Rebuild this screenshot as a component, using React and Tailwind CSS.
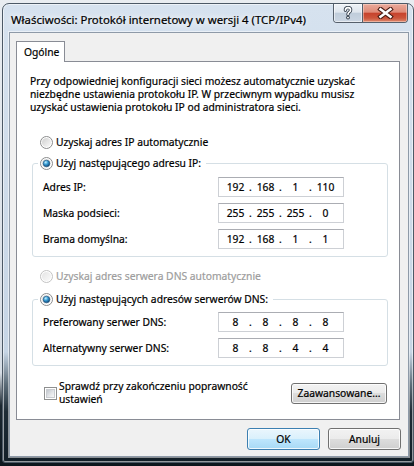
import { Fragment } from "react";

const sans = "font-['Noto_Sans','Open_Sans',sans-serif]";

function Radio({ id, checked = false, disabled = false }) {
  return (
    <svg width="13" height="13" viewBox="0 0 13 13" className="shrink-0">
      <defs>
        <linearGradient id={`${id}-bg`} x1="0" y1="0" x2="1" y2="1">
          <stop offset="0" stopColor={disabled ? "#e4e4e4" : "#cfcfcf"} />
          <stop offset="1" stopColor={disabled ? "#fafafa" : "#fbfbfb"} />
        </linearGradient>
        <radialGradient id={`${id}-dot`} cx="0.38" cy="0.32" r="0.7">
          <stop offset="0" stopColor="#c4f0ff" />
          <stop offset="0.45" stopColor="#3b9fd6" />
          <stop offset="1" stopColor="#0c4577" />
        </radialGradient>
      </defs>
      <circle cx="6.5" cy="6.5" r="6" fill="#fff" stroke={disabled ? "#c2c2c2" : "#8b8c8d"} />
      <circle cx="6.5" cy="6.5" r="4.6" fill={`url(#${id}-bg)`} />
      {checked && (
        <circle cx="6.5" cy="6.5" r="3.3" fill={`url(#${id}-dot)`} stroke="#1b4f7a" strokeWidth="0.6" />
      )}
    </svg>
  );
}

function Checkbox() {
  return (
    <span className="flex h-[13px] w-[13px] shrink-0 border border-[#8e8f8f] bg-white p-px">
      <span className="block h-full w-full border border-[#c9ccd1] bg-[linear-gradient(135deg,#c2c7cd_0%,#e3e5e8_55%,#f7f7f7_100%)]" />
    </span>
  );
}

function OptionRow({ id, checked, disabled, children }) {
  return (
    <div className={`flex h-[14px] items-center gap-[3px] whitespace-nowrap ${disabled ? "text-[#9d9d9d]" : "text-black"}`}>
      <Radio id={id} checked={checked} disabled={disabled} />
      <span>{children}</span>
    </div>
  );
}

function IpField({ parts }) {
  return (
    <div className="flex h-[20px] w-[126px] items-center border border-[#cdd0d5] border-t-[#abadb3] bg-white pl-[3px]">
      {parts.map((p, i) => (
        <Fragment key={i}>
          {i > 0 && <span className="w-[3px] text-center">.</span>}
          <span className="w-[27px] text-center">{p}</span>
        </Fragment>
      ))}
    </div>
  );
}

function FieldRow({ label, parts }) {
  return (
    <div className="flex h-[20px] items-center">
      <span className="w-[175px] whitespace-nowrap">{label}</span>
      <IpField parts={parts} />
    </div>
  );
}

function GroupBox({ id, title, rows, topPad, className = "" }) {
  return (
    <fieldset className={`w-[356px] rounded-[3px] border border-[#d5dfe5] px-0 pb-[7px] ${className}`}>
      <legend className="ml-[5px] px-[2px] pr-[5px]">
        <OptionRow id={id} checked>
          {title}
        </OptionRow>
      </legend>
      <div className={`flex flex-col gap-[6px] pl-[10px] ${topPad}`}>
        {rows.map((r) => (
          <FieldRow key={r.label} label={r.label} parts={r.parts} />
        ))}
      </div>
    </fieldset>
  );
}

function PushButton({ children, primary = false, className = "" }) {
  const skin = primary
    ? "border-[#3c7fb1] bg-[linear-gradient(to_bottom,#eaf6fd_0%,#d9f0fc_50%,#bee6fd_50%,#a7d9f5_100%)]"
    : "border-[#707070] bg-[linear-gradient(to_bottom,#f2f2f2_0%,#ebebeb_50%,#dddddd_50%,#cfcfcf_100%)]";
  return (
    <button
      type="button"
      className={`flex items-center justify-center rounded-[3px] border text-black shadow-[inset_0_0_0_1px_rgba(255,255,255,0.8)] ${skin} ${className}`}
    >
      {children}
    </button>
  );
}

function CaptionButtons() {
  return (
    <div className="mr-[5px] flex h-[19px] self-start overflow-hidden rounded-b-[4px] border border-t-0 border-[#56606c]">
      <div className="flex w-[28px] items-center justify-center bg-[linear-gradient(to_bottom,#eef2f7_0%,#dfe6ee_45%,#c0cddb_52%,#cbd6e3_100%)] shadow-[inset_0_0_0_1px_rgba(255,255,255,0.55)]">
        <svg width="10" height="14" viewBox="0 0 10 14">
          <path
            d="M2.4 4.3C2.4 2.5 3.6 1.6 5 1.6C6.6 1.6 7.6 2.6 7.6 3.9C7.6 5.2 6.8 5.8 6 6.4C5.3 6.9 5 7.4 5 8.5"
            fill="none"
            stroke="#3a4552"
            strokeWidth="3.4"
            strokeLinecap="round"
          />
          <path
            d="M2.4 4.3C2.4 2.5 3.6 1.6 5 1.6C6.6 1.6 7.6 2.6 7.6 3.9C7.6 5.2 6.8 5.8 6 6.4C5.3 6.9 5 7.4 5 8.5"
            fill="none"
            stroke="#ffffff"
            strokeWidth="1.6"
            strokeLinecap="round"
          />
          <circle cx="5" cy="11.6" r="1.9" fill="#3a4552" />
          <circle cx="5" cy="11.6" r="0.95" fill="#ffffff" />
        </svg>
      </div>
      <div className="w-px bg-[#56606c]" />
      <div className="flex w-[44px] items-center justify-center bg-[linear-gradient(to_bottom,#eaaa9b_0%,#df8b78_45%,#c7432d_52%,#cc553b_78%,#de8a6f_100%)] shadow-[inset_0_0_0_1px_rgba(255,230,220,0.45)]">
        <svg width="17" height="12" viewBox="0 0 17 12">
          <path d="M3.5 2.2L13.5 9.8M13.5 2.2L3.5 9.8" stroke="#4a1d14" strokeWidth="4.6" strokeLinecap="square" />
          <path d="M3.5 2.2L13.5 9.8M13.5 2.2L3.5 9.8" stroke="#ffffff" strokeWidth="2.5" strokeLinecap="square" />
        </svg>
      </div>
    </div>
  );
}

export default function App() {
  return (
    <div
      className={`h-[466px] w-[414px] overflow-hidden bg-[linear-gradient(to_bottom,#e9edf1_0%,#d6dde5_80%,#1c2831_87%,#0c161d_100%)] pl-[2px] pt-[3px] text-[10.3px] leading-[13px] text-black [-webkit-text-stroke:0.2px] ${sans}`}
    >
      <div className="flex h-[460px] w-[412px] flex-col rounded-b-[3px] rounded-t-[7px] border border-[#4c5966] bg-[linear-gradient(to_bottom,#d6e2ef_0%,#cfdcea_35%,#c6d5e5_76%,#5d6d79_83%,#1e2c36_89%,#121e27_100%)] shadow-[inset_0_0_0_1px_rgba(255,255,255,0.55)]">
        <div className="flex h-[28px] items-start">
          <div className="flex-1 whitespace-nowrap pl-[8px] pt-[8px] text-[11.4px] leading-[16px] [text-shadow:0_0_6px_#ffffff,0_0_10px_#ffffff]">
            Właściwości: Protokół internetowy w wersji 4 (TCP/IPv4)
          </div>
          <CaptionButtons />
        </div>

        <div className="mb-[5px] ml-[6px] mr-[4px] flex h-[425px] w-[400px] flex-col border border-[#8e9aa8] bg-[#f0f0f0] pb-[6px] pl-[6px] pr-[7px] pt-[8px] shadow-[0_0_0_1px_rgba(255,255,255,0.5)]">
          <div className="relative z-10 -mb-px flex h-[21px] w-[49px] items-center border border-b-0 border-[#898c95] bg-white pl-[7px]">
            Ogólne
          </div>

          <div className="flex h-[359px] w-[384px] flex-col border border-[#898c95] bg-white">
            <p className="ml-[13px] mt-[13px] whitespace-nowrap">
              Przy odpowiedniej konfiguracji sieci możesz automatycznie uzyskać
              <br />
              niezbędne ustawienia protokołu IP. W przeciwnym wypadku musisz
              <br />
              uzyskać ustawienia protokołu IP od administratora sieci.
            </p>

            <div className="ml-[23px] mt-[21px]">
              <OptionRow id="ip-auto">Uzyskaj adres IP automatycznie</OptionRow>
            </div>

            <GroupBox
              id="ip-manual"
              className="ml-[15px] mt-[7px]"
              topPad="pt-[7px]"
              title="Użyj następującego adresu IP:"
              rows={[
                { label: "Adres IP:", parts: ["192", "168", "1", "110"] },
                { label: "Maska podsieci:", parts: ["255", "255", "255", "0"] },
                { label: "Brama domyślna:", parts: ["192", "168", "1", "1"] },
              ]}
            />

            <div className="ml-[23px] mt-[12px]">
              <OptionRow id="dns-auto" disabled>
                Uzyskaj adres serwera DNS automatycznie
              </OptionRow>
            </div>

            <GroupBox
              id="dns-manual"
              className="ml-[15px] mt-[9px]"
              topPad="pt-[6px]"
              title="Użyj następujących adresów serwerów DNS:"
              rows={[
                { label: "Preferowany serwer DNS:", parts: ["8", "8", "8", "8"] },
                { label: "Alternatywny serwer DNS:", parts: ["8", "8", "4", "4"] },
              ]}
            />

            <div className="mt-[14px] flex items-center justify-between pl-[27px] pr-[12px]">
              <div className="flex items-center gap-[2px]">
                <Checkbox />
                <span className="whitespace-nowrap">
                  Sprawdź przy zakończeniu poprawność
                  <br />
                  ustawień
                </span>
              </div>
              <PushButton className="h-[21px] w-[96px]">Zaawansowane...</PushButton>
            </div>
          </div>

          <div className="mt-[8px] flex justify-end gap-[8px]">
            <PushButton primary className="h-[22px] w-[73px]">
              OK
            </PushButton>
            <PushButton className="h-[22px] w-[73px]">Anuluj</PushButton>
          </div>
        </div>
      </div>
    </div>
  );
}
